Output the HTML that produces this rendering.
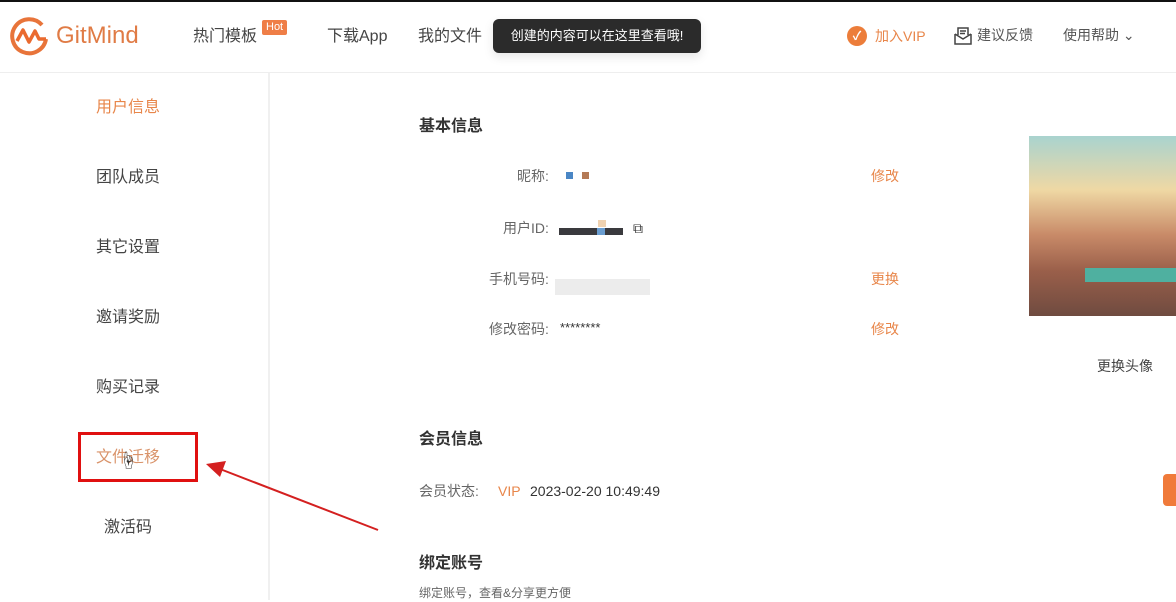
<!DOCTYPE html>
<html><head><meta charset="utf-8"><style>
*{margin:0;padding:0;box-sizing:border-box}
body{width:1176px;height:600px;overflow:hidden;background:#fff;font-family:"Liberation Sans","Noto Sans CJK SC",sans-serif;color:#333;position:relative}
.a{position:absolute;white-space:nowrap;line-height:1.45}
.o{color:#e8864a}
</style></head><body>
<div class="a" style="left:0;top:0;width:1176px;height:2px;background:#111"></div>
<div class="a" style="left:0;top:72px;width:1176px;height:1px;background:#eee"></div>
<svg class="a" style="left:8px;top:15px" width="42" height="42" viewBox="0 0 42 42">
<path d="M34 10 A17 17 0 1 0 38 24" fill="none" stroke="#e8743a" stroke-width="4"/>
<path d="M9 26 L15 15 L21 27 L27 16 L31 24 L38 24" fill="none" stroke="#ea6a2f" stroke-width="3.5" stroke-linejoin="round"/>
</svg>
<div class="a" style="left:56px;top:22px;font-size:24px;line-height:1.2;color:#e07b45">GitMind</div>
<div class="a" style="left:193px;top:25px;font-size:16px;color:#444">热门模板</div>
<div class="a" style="left:262px;top:20px;background:#ef7e47;color:#fff;font-size:11px;line-height:1.2;padding:1px 4px;border-radius:2px">Hot</div>
<div class="a" style="left:327px;top:25px;font-size:16px;color:#444">下载App</div>
<div class="a" style="left:418px;top:25px;font-size:16px;color:#444">我的文件</div>
<div class="a" style="left:493px;top:19px;width:208px;height:34px;background:#2b2b2b;border-radius:6px;color:#fff;font-size:13px;line-height:34px;text-align:center;box-shadow:0 4px 10px rgba(0,0,0,.1)">创建的内容可以在这里查看哦!</div>
<div class="a" style="left:847px;top:26px;width:20px;height:20px;border-radius:50%;background:#ec7d3a;color:#fff;font-size:12px;text-align:center;line-height:20px;font-weight:bold">✓</div>
<div class="a o" style="left:875px;top:26px;font-size:14px">加入VIP</div>
<svg class="a" style="left:953px;top:26px" width="20" height="20" viewBox="0 0 20 20"><path d="M2 8 L2 18 L18 18 L18 8 M2 8 L10 13 L18 8 M5 9 V2 H15 V9 M7 5 H13 M7 7.5 H12" fill="none" stroke="#444" stroke-width="1.5"/></svg>
<div class="a" style="left:977px;top:25px;font-size:14px;color:#555">建议反馈</div>
<div class="a" style="left:1063px;top:25px;font-size:14px;color:#555">使用帮助 ⌄</div>

<div class="a" style="left:0;top:73px;width:270px;height:527px;background:#fff;border-right:2px solid #f0f0f0"></div>
<div class="a o" style="left:96px;top:96px;font-size:16px">用户信息</div>
<div class="a" style="left:96px;top:166px;font-size:16px;color:#444">团队成员</div>
<div class="a" style="left:96px;top:236px;font-size:16px;color:#444">其它设置</div>
<div class="a" style="left:96px;top:306px;font-size:16px;color:#444">邀请奖励</div>
<div class="a" style="left:96px;top:376px;font-size:16px;color:#444">购买记录</div>
<div class="a o" style="left:96px;top:446px;font-size:16px;color:#d9936a">文件迁移</div>
<div class="a" style="left:78px;top:432px;width:120px;height:50px;border:3px solid #e01010"></div>
<div class="a" style="left:119px;top:448px;font-size:18px">☝</div>
<div class="a" style="left:104px;top:516px;font-size:16px;color:#444">激活码</div>
<svg class="a" style="left:200px;top:455px" width="185" height="80"><line x1="178" y1="75" x2="20" y2="14" stroke="#d42020" stroke-width="2"/><polygon points="6,9 26,6 20,22" fill="#d42020"/></svg>

<div class="a" style="left:419px;top:115px;font-size:16px;font-weight:bold">基本信息</div>
<div class="a" style="left:517px;top:166px;font-size:14px;color:#666">昵称:</div>
<div class="a" style="left:566px;top:172px;width:7px;height:7px;background:#4a86c5"></div>
<div class="a" style="left:582px;top:172px;width:7px;height:7px;background:#b47a56"></div>
<div class="a o" style="left:871px;top:166px;font-size:14px">修改</div>
<div class="a" style="left:503px;top:218px;font-size:14px;color:#666">用户ID:</div>
<div class="a" style="left:559px;top:228px;width:64px;height:7px;background:#3a3a3e"></div>
<div class="a" style="left:597px;top:228px;width:8px;height:7px;background:#6a9dd0"></div>
<div class="a" style="left:598px;top:220px;width:8px;height:7px;background:#f0d2b0"></div>
<div class="a" style="left:633px;top:218px;font-size:14px">⧉</div>
<div class="a" style="left:489px;top:269px;font-size:14px;color:#666">手机号码:</div>
<div class="a" style="left:555px;top:279px;width:95px;height:16px;background:#ececec"></div>
<div class="a o" style="left:871px;top:269px;font-size:14px">更换</div>
<div class="a" style="left:489px;top:319px;font-size:14px;color:#666">修改密码:</div>
<div class="a" style="left:560px;top:319px;font-size:13px">********</div>
<div class="a o" style="left:871px;top:319px;font-size:14px">修改</div>

<div class="a" style="left:1029px;top:136px;width:147px;height:180px;background:linear-gradient(180deg,#a9d3cf 0%,#efd8a4 30%,#c88a68 55%,#9a5f4a 75%,#6f4b40 100%)"></div>
<div class="a" style="left:1085px;top:268px;width:91px;height:14px;background:#4fb0a0"></div>
<div class="a" style="left:1097px;top:356px;font-size:14px;color:#444">更换头像</div>
<div class="a" style="left:1163px;top:474px;width:20px;height:32px;background:#f07a3a;border-radius:4px"></div>

<div class="a" style="left:419px;top:428px;font-size:16px;font-weight:bold">会员信息</div>
<div class="a" style="left:419px;top:481px;font-size:14px;color:#666">会员状态:</div>
<div class="a o" style="left:498px;top:481px;font-size:14px">VIP</div>
<div class="a" style="left:530px;top:481px;font-size:14px">2023-02-20 10:49:49</div>
<div class="a" style="left:419px;top:552px;font-size:16px;font-weight:bold">绑定账号</div>
<div class="a" style="left:419px;top:585px;font-size:12px;color:#666">绑定账号，查看&amp;分享更方便</div>
</body></html>
